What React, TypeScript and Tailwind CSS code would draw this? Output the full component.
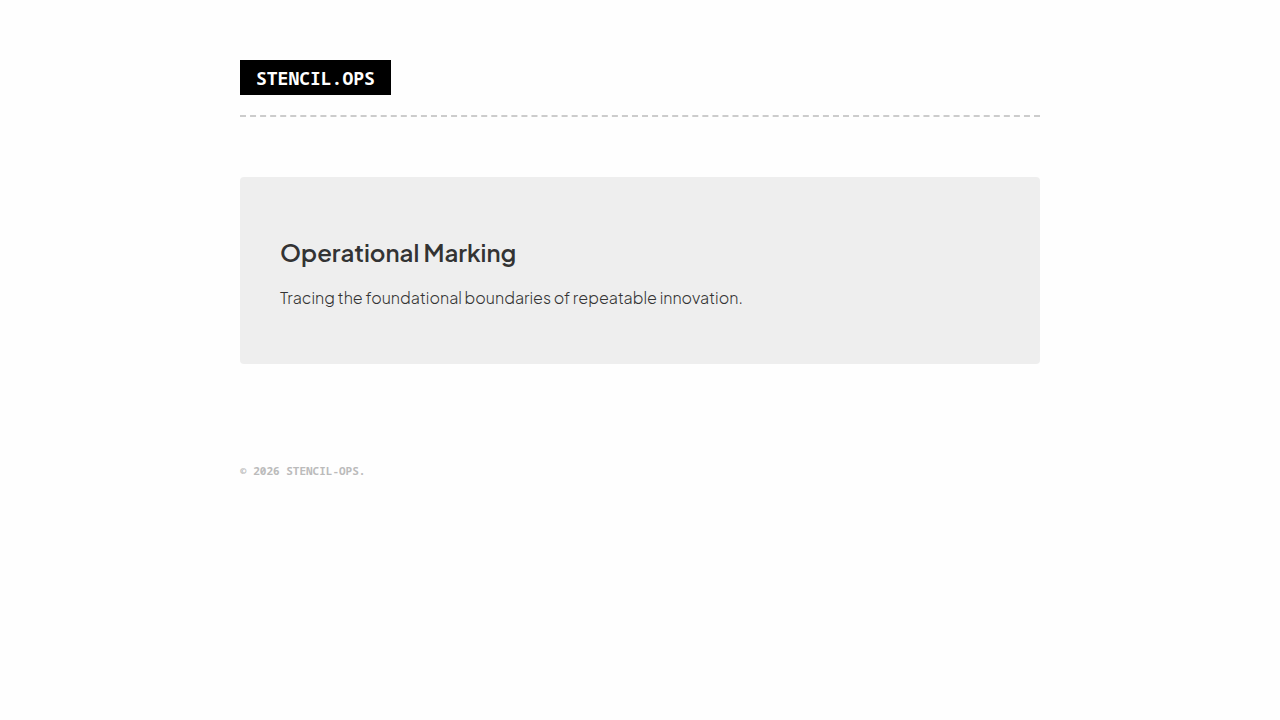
import React from "react";

export default function App() {
  return (
    <div className="min-h-screen bg-[#fefefe] text-[#333333] font-['Plus_Jakarta_Sans','Open_Sans',sans-serif]">
      <div className="mx-auto max-w-[840px] px-5 py-15">
        <header className="mb-15 border-b-2 border-dashed border-[#cccccc] pb-5">
          <a
            href="#"
            className="block w-fit bg-black px-4 pt-[6px] pb-1 font-['Noto_Sans_Mono','DejaVu_Sans_Mono',monospace] text-[18px] leading-[25px] font-bold text-white"
          >
            STENCIL.OPS
          </a>
        </header>

        <main className="rounded bg-[#eeeeee] px-10 pt-15 pb-14">
          <h1 className="text-[24px] leading-[31px] font-semibold">
            Operational Marking
          </h1>
          <p className="mt-5 text-base leading-5 font-light">
            Tracing the foundational boundaries of repeatable innovation.
          </p>
        </main>

        <footer className="mt-25 font-['Noto_Sans_Mono','DejaVu_Sans_Mono',monospace] text-[11px] leading-[13px] font-bold text-[#bbbbbb]">
          © 2026 STENCIL-OPS.
        </footer>
      </div>
    </div>
  );
}
